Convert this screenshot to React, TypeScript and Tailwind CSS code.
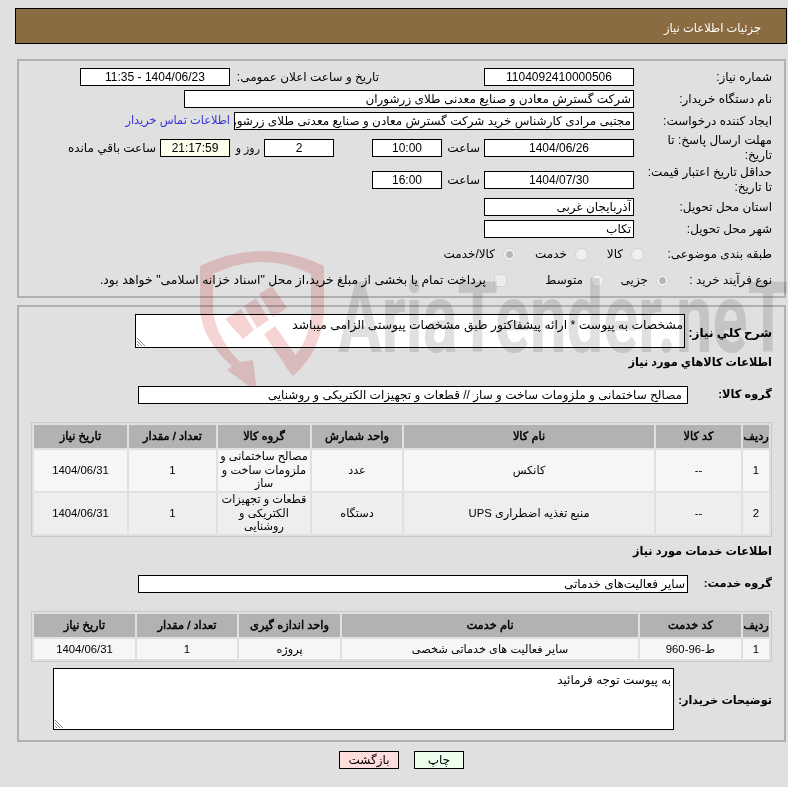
const boxBase = "h-[18px] shrink-0 border border-black text-[12px] leading-[16px] overflow-hidden whitespace-nowrap";

function Box({ className = "", children }: { className?: string; children?: React.ReactNode }) {
  return <div className={`${boxBase} ${className}`}>{children}</div>;
}

function Label({ children }: { children: React.ReactNode }) {
  return <div className="w-[150px] shrink-0 pr-[12px] text-[12px] leading-[15px] whitespace-nowrap">{children}</div>;
}

function Radio({ on }: { on?: boolean }) {
  return (
    <span className="inline-flex shrink-0 w-[13px] h-[13px] rounded-full border border-[#d2d2d2] bg-[#f0f0f0] items-center justify-center">
      {on && <span className="w-[7px] h-[7px] rounded-full bg-[#b8b8b8]" />}
    </span>
  );
}

function Grip() {
  return (
    <svg className="absolute left-[1px] bottom-[1px]" width="9" height="9" viewBox="0 0 9 9">
      <path d="M0 1 L8 9 M0 4 L5 9 M0 7 L2 9" stroke="#888" strokeWidth="1" />
    </svg>
  );
}

// faded site stamp that lies over the page
function Watermark() {
  return (
    <svg className="absolute left-0 top-0 pointer-events-none mix-blend-multiply" width="788" height="386" viewBox="0 0 788 386">
      <g fill="#f6d4d4">
        <path d="M200 266 Q262 236 324 266 L324 312 Q322 350 293 376 L285 366 Q310 345 311 312 L311 274 Q262 250 213 274 L213 312 Q218 340 240 362 L253 360 L257 392 L227 370 L232 366 Q204 342 200 312 Z" />
        <path d="M225 319 L241 309 L254 330 L243 339 Z" />
        <path d="M244 306 L256 298 L269 320 L257 328 Z" />
        <path d="M259 294 L272 286 L287 308 L273 317 Z" />
        <path d="M264 334 L275 326 L299 360 L292 375 Z" />
      </g>
      <text x="338" y="352" className="[direction:ltr]" fill="#e0e0e0" fontFamily="Roboto, 'Liberation Sans', sans-serif" fontWeight="700" fontSize="98" textLength="450" lengthAdjust="spacingAndGlyphs">
        AriaTender.neT
      </text>
    </svg>
  );
}

const goods = [
  { n: "1", name: "کانکس", unit: "عدد", group: ["مصالح ساختمانی و", "ملزومات ساخت و", "ساز"], bg: "bg-[#f6f6f6]" },
  { n: "2", name: "منبع تغذیه اضطراری UPS", unit: "دستگاه", group: ["قطعات و تجهیزات", "الکتریکی و", "روشنایی"], bg: "bg-[#eeeeee]" },
];

function Th({ className = "", children }: { className?: string; children?: React.ReactNode }) {
  return <th className={`bg-[#b2b2b2] h-[23px] p-0 text-[11.4px] font-normal [-webkit-text-stroke:0.45px_#000] text-center whitespace-nowrap ${className}`}>{children}</th>;
}

function Td({ className = "", children }: { className?: string; children?: React.ReactNode }) {
  return <td className={`text-center p-0 ${className}`}>{children}</td>;
}

export default function App() {
  return (
    <div dir="rtl" className="relative w-[788px] h-[787px] overflow-hidden bg-[#e0e0e0] text-black font-['Liberation_Sans','DejaVu_Sans',sans-serif]">
      {/* Header */}
      <div className="pt-[8px] pl-[15px] pr-[1px]">
        <div className="h-[36px] border border-black bg-[#8b6b41] text-white text-[11.5px] leading-[38px] pr-[25px]">
          جزئیات اطلاعات نیاز
        </div>
      </div>

      {/* Need details */}
      <div className="mt-[15px] ml-[17px] mr-[2px] h-[239px] border-2 border-[#b0b0b0] pt-[7px]">
        <div className="flex items-center">
          <Label>شماره نیاز:</Label>
          <Box className="w-[150px] text-center bg-white">1104092410000506</Box>
          <div className="w-[144px] mr-[105px] shrink-0 text-[12px] whitespace-nowrap">تاریخ و ساعت اعلان عمومی:</div>
          <Box className="w-[150px] mr-[5px] text-center bg-white">1404/06/23 - 11:35</Box>
        </div>
        <div className="flex items-center mt-[4px]">
          <Label>نام دستگاه خریدار:</Label>
          <Box className="w-[450px] pr-[2px] bg-white">شرکت گسترش معادن و صنایع معدنی طلای زرشوران</Box>
        </div>
        <div className="flex items-center mt-[4px]">
          <Label>ایجاد کننده درخواست:</Label>
          <Box className="w-[400px] pr-[2px] bg-white text-[12.2px]">مجتبی مرادی کارشناس خرید شرکت گسترش معادن و صنایع معدنی طلای زرشوران</Box>
          <span className="mr-[4px] text-[11.4px] text-[#3333dd] whitespace-nowrap">اطلاعات تماس خریدار</span>
        </div>
        <div className="flex items-center h-[18px] mt-[9px]">
          <Label>مهلت ارسال پاسخ: تا<br />تاریخ:</Label>
          <Box className="w-[150px] text-center bg-white">1404/06/26</Box>
          <span className="w-[42px] shrink-0 pr-[4px] text-[12px]">ساعت</span>
          <Box className="w-[70px] text-center bg-white">10:00</Box>
          <span className="w-[38px] shrink-0" />
          <Box className="w-[70px] text-center bg-white">2</Box>
          <span className="w-[34px] shrink-0 pr-[4px] text-[11px] whitespace-nowrap">روز و</span>
          <Box className="w-[70px] text-center bg-[#ffffee]">21:17:59</Box>
          <span className="mr-[4px] text-[12px] whitespace-nowrap">ساعت باقي مانده</span>
        </div>
        <div className="flex items-center h-[18px] mt-[14px]">
          <Label>حداقل تاریخ اعتبار قیمت:<br />تا تاریخ:</Label>
          <Box className="w-[150px] text-center bg-white">1404/07/30</Box>
          <span className="w-[42px] shrink-0 pr-[4px] text-[12px]">ساعت</span>
          <Box className="w-[70px] text-center bg-white">16:00</Box>
        </div>
        <div className="flex items-center mt-[9px]">
          <Label>استان محل تحویل:</Label>
          <Box className="w-[150px] pr-[2px] bg-white">آذربایجان غربی</Box>
        </div>
        <div className="flex items-center mt-[4px]">
          <Label>شهر محل تحویل:</Label>
          <Box className="w-[150px] pr-[2px] bg-white">تکاب</Box>
        </div>
        <div className="flex items-center h-[18px] mt-[7px]">
          <Label>طبقه بندی موضوعی:</Label>
          <div className="flex items-center -mr-[10px] text-[12px] whitespace-nowrap">
            <Radio />
            <span className="w-[43px] pr-[8px]">کالا</span>
            <Radio />
            <span className="w-[59px] pr-[8px]">خدمت</span>
            <Radio on />
            <span className="pr-[8px]">کالا/خدمت</span>
          </div>
        </div>
        <div className="flex items-center h-[18px] mt-[8px]">
          <Label>نوع فرآیند خرید :</Label>
          <div className="flex items-center -mr-[35px] text-[12px] whitespace-nowrap">
            <Radio on />
            <span className="w-[52px] pr-[8px]">جزیی</span>
            <Radio />
            <span className="w-[84px] pr-[8px]">متوسط</span>
            <span className="shrink-0 w-[13px] h-[13px] rounded-[2px] border border-[#d2d2d2] bg-[#ececec]" />
            <span className="pr-[8px] text-[12.4px]">پرداخت تمام یا بخشی از مبلغ خرید،از محل "اسناد خزانه اسلامی" خواهد بود.</span>
          </div>
        </div>
      </div>

      {/* Description, goods and services */}
      <div className="mt-[7px] ml-[17px] mr-[2px] h-[437px] border-2 border-[#b0b0b0] pt-[7px]">
        <div className="flex items-center">
          <div className="w-[99px] shrink-0 pr-[12px] pt-[3px] text-[12px] font-bold whitespace-nowrap">شرح کلي نیاز:</div>
          <div className="relative w-[550px] h-[34px] border border-black bg-white text-[12.3px] leading-[16px] pt-[2px] pr-[1px] whitespace-nowrap">
            مشخصات به پیوست * ارائه پیشفاکتور طبق مشخصات پیوستی الزامی میباشد
            <Grip />
          </div>
        </div>

        <div className="mt-[6px] h-[16px] pr-[12px] text-[11.3px] leading-[16px] font-bold">اطلاعات کالاهاي مورد نیاز</div>
        <div className="flex items-center mt-[16px]">
          <div className="w-[96px] shrink-0 pr-[12px] text-[11.4px] font-bold whitespace-nowrap">گروه کالا:</div>
          <Box className="w-[550px] pr-[5px] bg-white">مصالح ساختمانی و ملزومات ساخت و ساز // قطعات و تجهیزات الکتریکی و روشنایی</Box>
        </div>

        <div className="mt-[18px] mr-[12px] w-[741px] border border-[#c8c8c8]">
          <table className="w-full border-separate border-spacing-[2px] text-[11.3px] table-fixed">
            <thead>
              <tr>
                <Th className="w-[26px]">ردیف</Th>
                <Th className="w-[85px]">کد کالا</Th>
                <Th className="w-[250px]">نام کالا</Th>
                <Th className="w-[90px]">واحد شمارش</Th>
                <Th className="w-[92px]">گروه کالا</Th>
                <Th className="w-[87px]">تعداد / مقدار</Th>
                <Th className="w-[93px]">تاریخ نیاز</Th>
              </tr>
            </thead>
            <tbody>
              {goods.map((g) => (
                <tr key={g.n} className={g.bg}>
                  <Td className="h-[41px]">{g.n}</Td>
                  <Td>--</Td>
                  <Td>{g.name}</Td>
                  <Td>{g.unit}</Td>
                  <Td className="leading-[13.5px] whitespace-nowrap">
                    {g.group.map((line) => (
                      <div key={line}>{line}</div>
                    ))}
                  </Td>
                  <Td>1</Td>
                  <Td>1404/06/31</Td>
                </tr>
              ))}
            </tbody>
          </table>
        </div>

        <div className="mt-[6px] h-[16px] pr-[12px] text-[11.3px] leading-[16px] font-bold">اطلاعات خدمات مورد نیاز</div>
        <div className="flex items-center mt-[16px]">
          <div className="w-[96px] shrink-0 pr-[12px] text-[11.4px] font-bold whitespace-nowrap">گروه خدمت:</div>
          <Box className="w-[550px] pr-[2px] bg-white">سایر فعالیت‌های خدماتی</Box>
        </div>

        <div className="mt-[18px] mr-[12px] w-[741px] border border-[#c8c8c8]">
          <table className="w-full border-separate border-spacing-[2px] text-[11.3px] table-fixed">
            <thead>
              <tr>
                <Th className="w-[26px]">ردیف</Th>
                <Th className="w-[101px]">کد خدمت</Th>
                <Th className="w-[296px]">نام خدمت</Th>
                <Th className="w-[101px]">واحد اندازه گیری</Th>
                <Th className="w-[100px]">تعداد / مقدار</Th>
                <Th className="w-[101px]">تاریخ نیاز</Th>
              </tr>
            </thead>
            <tbody>
              <tr className="bg-[#f6f6f6]">
                <Td className="h-[20px]">1</Td>
                <Td>ط-96-960</Td>
                <Td>سایر فعالیت های خدماتی شخصی</Td>
                <Td>پروژه</Td>
                <Td>1</Td>
                <Td>1404/06/31</Td>
              </tr>
            </tbody>
          </table>
        </div>

        <div className="flex items-center mt-[6px]">
          <div className="w-[110px] shrink-0 pr-[12px] pt-[3px] text-[11.3px] font-bold whitespace-nowrap">توضیحات خریدار:</div>
          <div className="relative w-[621px] h-[62px] border border-black bg-white text-[12px] leading-[16px] pt-[3px] pr-[2px]">
            به پیوست توجه فرمائید
            <Grip />
          </div>
        </div>
      </div>

      {/* Buttons */}
      <div className="flex justify-center gap-[15px] mt-[9px] pl-[15px]">
        <button className="w-[50px] h-[18px] border border-black bg-[#eeffee] text-[12px] leading-[16px]">چاپ</button>
        <button className="w-[60px] h-[18px] border border-black bg-[#ffdddd] text-[12px] leading-[16px]">بازگشت</button>
      </div>

      <Watermark />
    </div>
  );
}
